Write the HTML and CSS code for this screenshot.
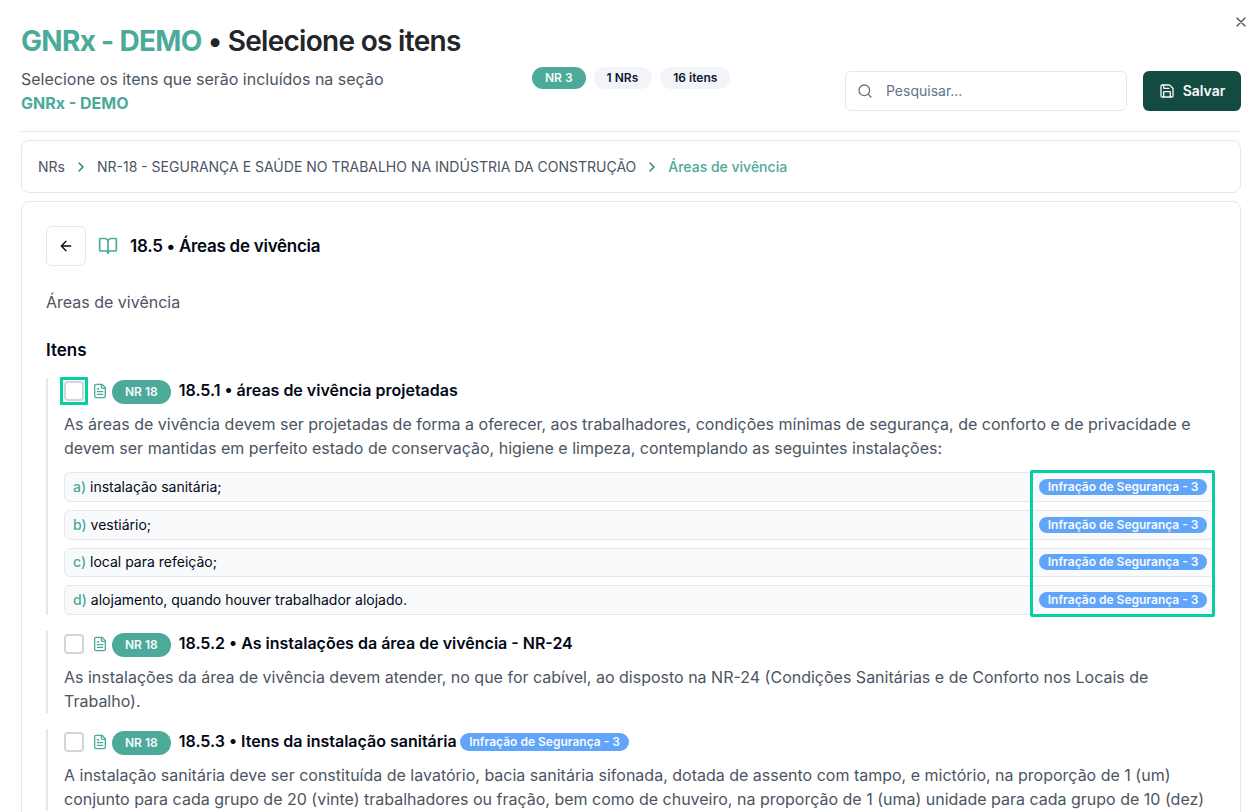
FILE: index.html
```html
<!DOCTYPE html>
<html lang="pt-BR">
<head>
<meta charset="utf-8">
<title>Selecione os itens</title>
<link rel="stylesheet" href="styles.css">
</head>
<body>
<svg class="defs" width="0" height="0">
  <symbol id="chevron" viewBox="0 0 24 24"><path d="m9 18 6-6-6-6"/></symbol>
  <symbol id="file" viewBox="0 0 24 24"><path d="M15 2H6a2 2 0 0 0-2 2v16a2 2 0 0 0 2 2h12a2 2 0 0 0 2-2V7Z"/><path d="M14 2v4a2 2 0 0 0 2 2h4"/><path d="M10 9H8M16 13H8M16 17H8"/></symbol>
</svg>
<div class="dialog">
  <button class="close" aria-label="Fechar"><svg class="icon" viewBox="0 0 24 24"><path d="M18 6 6 18M6 6l12 12"/></svg></button>
  <header class="header">
    <div class="intro">
      <h1 class="title"><span class="brand">GNRx - DEMO</span> • Selecione os itens</h1>
      <p class="lead">Selecione os itens que serão incluídos na seção<br><strong class="lead-name">GNRx - DEMO</strong></p>
    </div>
    <div class="pills">
      <span class="pill pill-green">NR 3</span><span class="pill pill-count">1 NRs</span><span class="pill">16 itens</span>
    </div>
    <div class="actions">
      <div class="search"><svg class="icon" viewBox="0 0 24 24"><circle cx="11" cy="11" r="8"/><path d="m21 21-4.3-4.3"/></svg><span>Pesquisar...</span></div>
      <button class="save"><svg class="icon" viewBox="0 0 24 24"><path d="M15.2 3a2 2 0 0 1 1.4.6l3.8 3.8a2 2 0 0 1 .6 1.4V19a2 2 0 0 1-2 2H5a2 2 0 0 1-2-2V5a2 2 0 0 1 2-2z"/><path d="M17 21v-7a1 1 0 0 0-1-1H8a1 1 0 0 0-1 1v7M7 3v4a1 1 0 0 0 1 1h7"/></svg><span>Salvar</span></button>
    </div>
  </header>
  <nav class="crumbs">
    <span>NRs</span><svg class="icon chevron"><use href="#chevron"/></svg><span>NR-18 - SEGURANÇA E SAÚDE NO TRABALHO NA INDÚSTRIA DA CONSTRUÇÃO</span><svg class="icon chevron"><use href="#chevron"/></svg><span class="current">Áreas de vivência</span>
  </nav>
  <main class="card">
    <div class="section-head">
      <button class="back" aria-label="Voltar"><svg class="icon" viewBox="0 0 24 24"><path d="m12 19-7-7 7-7M19 12H5"/></svg></button>
      <svg class="icon book" viewBox="0 0 24 24"><path d="M12 7v14M3 18a1 1 0 0 1-1-1V4a1 1 0 0 1 1-1h5a4 4 0 0 1 4 4 4 4 0 0 1 4-4h5a1 1 0 0 1 1 1v13a1 1 0 0 1-1 1h-6a3 3 0 0 0-3 3 3 3 0 0 0-3-3z"/></svg>
      <h2 class="section-title">18.5 • Áreas de vivência</h2>
    </div>
    <p class="summary">Áreas de vivência</p>
    <h3 class="list-title">Itens</h3>
    <div class="items">
      <article class="item">
        <div class="item-head"><span class="check marked"></span><svg class="icon file"><use href="#file"/></svg><span class="pill tag">NR 18</span><h4 class="item-title">18.5.1 • áreas de vivência projetadas</h4></div>
        <p class="text">As áreas de vivência devem ser projetadas de forma a oferecer, aos trabalhadores, condições mínimas de segurança, de conforto e de privacidade e<br>devem ser mantidas em perfeito estado de conservação, higiene e limpeza, contemplando as seguintes instalações:</p>
        <div class="subs">
          <div class="sub"><span class="sub-text"><b>a)</b> instalação sanitária;</span><span class="risk">Infração de Segurança - 3</span></div>
          <div class="sub"><span class="sub-text"><b>b)</b> vestiário;</span><span class="risk">Infração de Segurança - 3</span></div>
          <div class="sub"><span class="sub-text"><b>c)</b> local para refeição;</span><span class="risk">Infração de Segurança - 3</span></div>
          <div class="sub"><span class="sub-text"><b>d)</b> alojamento, quando houver trabalhador alojado.</span><span class="risk">Infração de Segurança - 3</span></div>
          <div class="callout"></div>
        </div>
      </article>
      <article class="item">
        <div class="item-head"><span class="check"></span><svg class="icon file"><use href="#file"/></svg><span class="pill tag">NR 18</span><h4 class="item-title">18.5.2 • As instalações da área de vivência - NR-24</h4></div>
        <p class="text">As instalações da área de vivência devem atender, no que for cabível, ao disposto na NR-24 (Condições Sanitárias e de Conforto nos Locais de<br>Trabalho).</p>
      </article>
      <article class="item">
        <div class="item-head"><span class="check"></span><svg class="icon file"><use href="#file"/></svg><span class="pill tag">NR 18</span><h4 class="item-title">18.5.3 • Itens da instalação sanitária</h4><span class="risk risk-title">Infração de Segurança - 3</span></div>
        <p class="text">A instalação sanitária deve ser constituída de lavatório, bacia sanitária sifonada, dotada de assento com tampo, e mictório, na proporção de 1 (um)<br>conjunto para cada grupo de 20 (vinte) trabalhadores ou fração, bem como de chuveiro, na proporção de 1 (uma) unidade para cada grupo de 10 (dez)</p>
      </article>
    </div>
  </main>
</div>
</body>
</html>
```
FILE: styles.css
```css
* { box-sizing: border-box; margin: 0; padding: 0; }
html, body { height: 812px; overflow: hidden; }
body { background: #fff; color: #020817; font-family: Inter, "Liberation Sans", sans-serif; font-size: 16px; line-height: 24px; }
button { font: inherit; border: 0; background: none; }
.defs { position: absolute; }
.icon { width: 16px; height: 16px; flex: none; fill: none; stroke: currentColor; stroke-width: 2; stroke-linecap: round; stroke-linejoin: round; }
.dialog { padding: 23px 19px 0 21px; white-space: nowrap; }
.close { position: absolute; left: 1233px; top: 14px; width: 16px; height: 16px; color: #4b5158; }
.close .icon { display: block; }
.header { display: grid; grid-template-columns: 511px 313px 1fr; height: 109px; border-bottom: 1px solid #e2e5e9; }
.title { font-size: 28px; line-height: 36px; font-weight: 600; letter-spacing: -0.7px; color: #222529; }
.brand { font-weight: 700; color: #4baa99; }
.lead { margin-top: 8px; color: #4b5563; }
.lead-name { font-weight: 700; color: #4baa99; }
.pills { display: flex; align-items: flex-start; gap: 8px; padding-top: 44px; }
.pill { height: 22px; padding: 0 13px; border-radius: 12px; background: #f1f5f9; color: #0f172a; font-size: 12px; line-height: 22px; font-weight: 600; }
.pill-count { padding-right: 14px; }
.pill-green, .tag { background: #4baa99; color: #f8fafc; }
.actions { display: flex; gap: 16px; padding-top: 48px; }
.search { display: flex; align-items: center; gap: 13px; width: 282px; height: 40px; padding-left: 11px; border: 1px solid #e2e8f0; border-radius: 6px; font-size: 14px; color: #64748b; }
.search .icon { color: #6b7280; }
.save { display: flex; align-items: center; justify-content: center; gap: 8px; width: 98px; height: 40px; border-radius: 6px; background: #134b40; color: #f8fafc; font-size: 14px; font-weight: 600; }
.crumbs { display: flex; align-items: center; gap: 8px; height: 53px; margin-top: 8px; padding: 0 16px; border: 1px solid #e2e8f0; border-radius: 8px; font-size: 14px; color: #4b5563; }
.chevron { color: #258069; }
.current { color: #4baa99; font-weight: 500; }
.card { height: 640px; margin-top: 8px; padding: 24px 25px 0 24px; border: 1px solid #e2e8f0; border-radius: 8px; }
.section-head { display: flex; align-items: center; }
.back { display: grid; place-items: center; width: 40px; height: 40px; border: 1px solid #e2e8f0; border-radius: 6px; color: #020817; }
.book { width: 20px; height: 20px; margin: 0 12px; color: #4baa99; }
.section-title { font-size: 17px; font-weight: 600; letter-spacing: -0.27px; }
.summary { margin-top: 24px; color: #4b5563; }
.list-title { margin-top: 24px; font-size: 17px; font-weight: 600; }
.items { display: grid; gap: 16px; margin-top: 16px; }
.item { padding-left: 16px; border-left: 2px solid #e5e7eb; }
.item-head { display: flex; align-items: center; height: 26px; margin-bottom: 8px; }
.check { width: 20px; height: 20px; border: 2px solid #d1d5db; border-radius: 4px; }
.marked { box-shadow: 0 0 0 1px #fff; border-radius: 4px; position: relative; }
.marked::after { content: ""; position: absolute; inset: -6px; border: 3px solid #06cfa4; border-radius: 1px; }
.file { margin: 0 4px 0 8px; color: #4baa99; }
.tag { height: 24px; line-height: 24px; margin-top: 2px; }
.item-title { margin: -2px 0 0 8px; font-size: 16px; font-weight: 600; }
.text { color: #4b5563; }
.subs { position: relative; display: grid; gap: 8px; margin-top: 12px; }
.sub { display: flex; justify-content: space-between; align-items: center; height: 29.75px; padding: 0 7px 0 8px; border: 1px solid #e5e7eb; border-radius: 6px; background: #f9fafb; font-size: 14px; }
.sub b { font-weight: 500; color: #4baa99; }
.risk { height: 16px; padding: 0 9px; border-radius: 9px; background: #60a5fa; color: #f8fafc; font-size: 12px; line-height: 16px; font-weight: 600; }
.sub .risk { padding-right: 8.5px; }
.risk-title { height: 18px; line-height: 18px; margin-left: 3.5px; }
.callout { position: absolute; left: 966px; top: -2px; width: 185px; height: 147px; border: 3px solid #06cfa4; border-radius: 2px; }
```
